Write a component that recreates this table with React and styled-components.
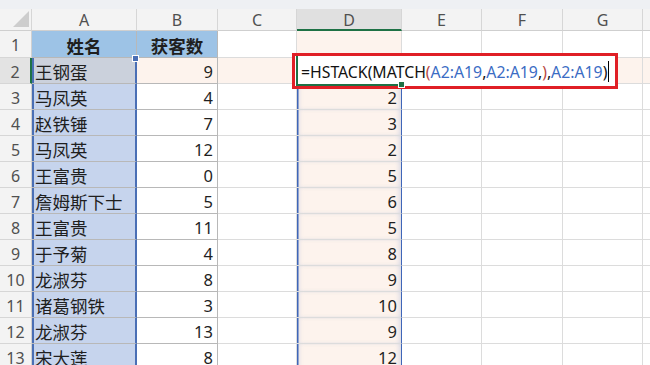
import React from "react";
import styled, { createGlobalStyle, css } from "styled-components";

const Global = createGlobalStyle`
  html, body { margin: 0; padding: 0; background: #fff; overflow: hidden; }
  body { font-family: "Noto Sans", "Noto Sans CJK SC", sans-serif; }
`;

const Page = styled.div`
  width: 650px;
  height: 365px;
  overflow: hidden;
  background: #fff;
`;

const TopStrip = styled.div`
  height: 9px;
  background: #eef0f3;
`;

const Sheet = styled.div`
  display: grid;
  grid-template-columns: 32px 105px 81px 79px 105px 80px 81px 80px 1fr;
  grid-template-rows: 22px 27px repeat(12, 26px);
`;

const Corner = styled.div`
  position: relative;
  box-sizing: border-box;
  background: #f3f3f3;
  border-right: 1px solid #d6d6d6;
  border-bottom: 1px solid #cfcfcf;
`;

const CornerMark = styled.svg`
  position: absolute;
  right: 2px;
  bottom: 3px;
`;

const ColHeader = styled.div`
  box-sizing: border-box;
  display: flex;
  align-items: center;
  justify-content: center;
  background: ${(p) => (p.$active ? "#e0e0e0" : "#f3f3f3")};
  border-right: 1px solid #d6d6d6;
  border-bottom: ${(p) => (p.$active ? "2px solid #1e7145" : "1px solid #cfcfcf")};
  color: #505050;
  font-size: 16px;
  padding-top: 1px;
`;

const RowHeader = styled.div`
  box-sizing: border-box;
  display: flex;
  align-items: center;
  justify-content: center;
  background: ${(p) => (p.$active ? "#e3e3e3" : "#f3f3f3")};
  border-right: ${(p) => (p.$active ? "2px solid #1e7145" : "1px solid #d0d0d0")};
  border-bottom: 1px solid #d6d6d6;
  color: #505050;
  font-size: 16px;
  padding-top: 2px;
`;

const fills = {
  none: "#ffffff",
  head: "#9dc3e6",
  sel: "#c6d4ed",
  selActive: "#cbd1dc",
  peach: "#fdf3ed",
};

const Cell = styled.div`
  position: relative;
  box-sizing: border-box;
  display: flex;
  align-items: center;
  justify-content: ${(p) =>
    p.$align === "right" ? "flex-end" : p.$align === "center" ? "center" : "flex-start"};
  padding: 2px 4px 0 4px;
  background: ${(p) => fills[p.$fill || "none"]};
  border-right: 1px solid ${(p) => (p.$table ? "#b8b8b8" : "#dcdcdc")};
  border-bottom: 1px solid ${(p) => (p.$table ? "#b8b8b8" : "#dcdcdc")};
  color: #1f1f1f;
  font-size: ${(p) => (p.$cjk ? "17.5px" : "16.5px")};
  font-weight: ${(p) => (p.$bold ? 700 : 400)};
  white-space: nowrap;
  ${(p) =>
    p.$selected &&
    css`
      border-right: 2px solid #4a6fb5;
      box-shadow: inset 2px 0 0 #4a6fb5;
      padding-left: 3px;
    `}
  ${(p) =>
    p.$spill &&
    css`
      border-right: 1.5px solid #3f66b8;
      box-shadow: inset 1.5px 0 0 #3f66b8, inset 4px 0 4px -2px rgba(120, 150, 210, 0.25),
        inset -4px 0 4px -2px rgba(120, 150, 210, 0.25);
    `}
`;

const SelHandle = styled.span`
  position: absolute;
  right: -4px;
  top: -3px;
  width: 5px;
  height: 5px;
  background: #4a6fb5;
  border: 1px solid #fff;
  z-index: 3;
`;

const Editor = styled.div`
  position: absolute;
  left: -5px;
  top: -5px;
  width: 326px;
  height: 36px;
  box-sizing: border-box;
  border: 3px solid #e01f26;
  background: #fff;
  z-index: 5;
  display: flex;
  align-items: center;
  padding: 1px 0 0 6px;
  font-size: 15.8px;
  color: #111;
  white-space: nowrap;
`;

const ActiveFrame = styled.span`
  position: absolute;
  left: 1px;
  top: 0;
  width: 106px;
  height: 30px;
  box-sizing: border-box;
  border-left: 2px solid #1e7145;
  border-bottom: 2px solid #1e7145;
  pointer-events: none;
`;

const FrameHandle = styled.span`
  position: absolute;
  right: -3px;
  bottom: -4px;
  width: 5px;
  height: 5px;
  background: #1e7145;
  border: 1px solid #fff;
`;

const Tok = styled.span`
  color: ${(p) => (p.$kind === "ref" ? "#3b6cc4" : p.$kind === "paren" ? "#b8473f" : "#111")};
`;

const Caret = styled.span`
  display: inline-block;
  width: 1px;
  height: 21px;
  background: #000;
  margin-left: 1px;
  vertical-align: middle;
`;

const names = ["王钢蛋", "马凤英", "赵铁锤", "马凤英", "王富贵", "詹姆斯下士", "王富贵", "于予菊", "龙淑芬", "诸葛钢铁", "龙淑芬", "宋大莲"];
const counts = [9, 4, 7, 12, 0, 5, 11, 4, 8, 3, 13, 8];
const dvals = [null, 2, 3, 2, 5, 6, 5, 8, 9, 10, 9, 12];
const cols = ["A", "B", "C", "D", "E", "F", "G", ""];

const tokens = [
  ["=HSTACK(MATCH", "txt"],
  ["(", "paren"],
  ["A2:A19", "ref"],
  [",", "txt"],
  ["A2:A19", "ref"],
  [",", "txt"],
  [")", "paren"],
  [",", "txt"],
  ["A2:A19", "ref"],
  [")", "txt"],
];

export default function App() {
  const rows = [];
  rows.push(
    <React.Fragment key="r1">
      <RowHeader>1</RowHeader>
      <Cell $fill="head" $table $align="center" $cjk $bold>姓名</Cell>
      <Cell $fill="head" $table $align="center" $cjk $bold>获客数</Cell>
      <Cell />
      <Cell $fill="peach" />
      <Cell />
      <Cell />
      <Cell />
      <Cell />
    </React.Fragment>
  );
  names.forEach((n, i) => {
    const r = i + 2;
    const active = r === 2;
    rows.push(
      <React.Fragment key={"r" + r}>
        <RowHeader $active={active}>{r}</RowHeader>
        <Cell $fill={active ? "selActive" : "sel"} $table $selected $cjk>
          {n}
          {active && <SelHandle />}
        </Cell>
        <Cell $fill={active ? "peach" : "none"} $table $align="right">
          {counts[i]}
        </Cell>
        <Cell $fill={active ? "peach" : "none"} />
        <Cell $fill="peach" $spill $align="right">
          {active ? (
            <Editor>
              <ActiveFrame>
                <FrameHandle />
              </ActiveFrame>
              {tokens.map(([t, k], j) => (
                <Tok key={j} $kind={k}>
                  {t}
                </Tok>
              ))}
              <Caret />
            </Editor>
          ) : (
            dvals[i]
          )}
        </Cell>
        <Cell $fill={active ? "peach" : "none"} />
        <Cell $fill={active ? "peach" : "none"} />
        <Cell $fill={active ? "peach" : "none"} />
        <Cell $fill={active ? "peach" : "none"} />
      </React.Fragment>
    );
  });

  return (
    <Page>
      <Global />
      <TopStrip />
      <Sheet>
        <Corner>
          <CornerMark width="16" height="16" viewBox="0 0 16 16">
            <polygon points="16,0 16,16 0,16" fill="#cdcdcd" />
          </CornerMark>
        </Corner>
        {cols.map((c) => (
          <ColHeader key={c || "x"} $active={c === "D"}>
            {c}
          </ColHeader>
        ))}
        {rows}
      </Sheet>
    </Page>
  );
}
